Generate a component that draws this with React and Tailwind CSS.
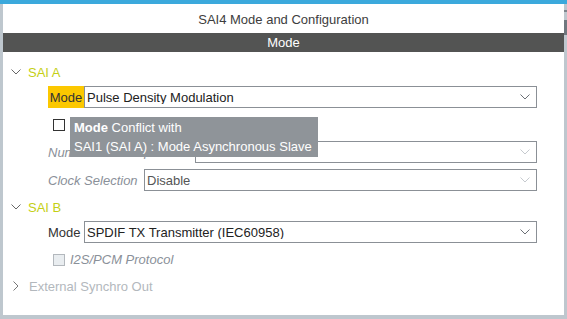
import React from 'react';

const ChevronDown = ({ className }) => (
    <svg className={className} width="10" height="6" viewBox="0 0 10 6" fill="none" stroke="currentColor" strokeWidth="1">
        <path d="M0.5 0.5L5 5L9.5 0.5" />
    </svg>
);

const ChevronRight = ({ className }) => (
    <svg className={className} width="6" height="10" viewBox="0 0 6 10" fill="none" stroke="currentColor" strokeWidth="1">
        <path d="M0.5 0.5L5 5L0.5 9.5" />
    </svg>
);

const Select = ({ value, disabled, className }) => (
    <div className={`h-[22px] border border-[#8b9096] bg-white flex items-center pl-[2px] pr-[6px] ${className}`}>
        <span className={`flex-1 truncate ${disabled ? 'text-[#555]' : 'text-[#222]'}`}>{value}</span>
        <ChevronDown className={disabled ? 'text-[#c6cacf]' : 'text-[#6b7076]'} />
    </div>
);

const App = () => {
    return (
        <div
            className="w-[567px] h-[319px] flex flex-col bg-[#bec7ce] overflow-hidden text-[13px] leading-none"
            style={{ fontFamily: '"Liberation Sans", Arial, sans-serif' }}
        >
            {/* Top accent */}
            <div className="h-[4px] bg-[#3ba9dc] shrink-0" />

            <div className="flex flex-1 min-h-0">
                <div className="w-[3px] bg-[#bec7ce] shrink-0" />

                {/* Main panel */}
                <div className="flex-1 bg-white flex flex-col relative">
                    <div className="h-[29px] flex items-center justify-center text-[#3d3d3d] pt-[1px]">SAI4 Mode and Configuration</div>
                    <div className="h-[19px] bg-[#535453] text-white flex items-center justify-center">Mode</div>

                    {/* Tree */}
                    <div className="flex flex-col pt-[10px]">
                        {/* SAI A */}
                        <div className="h-[20px] flex items-center">
                            <ChevronDown className="ml-[8px] text-[#666]" />
                            <span className="ml-[7px] text-[#c4cf14]">SAI A</span>
                        </div>
                        <div className="h-[22px] mt-[4px] flex items-stretch ml-[45px] mr-[27px]">
                            <div className="w-[36px] bg-[#fcc800] text-[#333] flex items-center justify-center">Mode</div>
                            <Select value="Pulse Density Modulation" className="flex-1" />
                        </div>
                        <div className="h-[33px] flex items-center ml-[50px]">
                            <div className="w-[12px] h-[12px] border border-[#333] bg-white" />
                        </div>
                        <div className="h-[22px] flex items-center ml-[45px] mr-[27px]">
                            <span className="italic text-[#8a9099] w-[147px] whitespace-nowrap overflow-hidden">Number of Microphones</span>
                            <Select value="" disabled className="flex-1" />
                        </div>
                        <div className="h-[22px] mt-[6px] flex items-center ml-[45px] mr-[27px]">
                            <span className="italic text-[#8a9099] w-[96px] whitespace-nowrap">Clock Selection</span>
                            <Select value="Disable" disabled className="flex-1" />
                        </div>

                        {/* SAI B */}
                        <div className="h-[20px] mt-[6px] flex items-center">
                            <ChevronDown className="ml-[8px] text-[#666]" />
                            <span className="ml-[7px] text-[#c4cf14]">SAI B</span>
                        </div>
                        <div className="h-[22px] mt-[4px] flex items-center ml-[45px] mr-[27px]">
                            <span className="text-[#333] w-[36px]">Mode</span>
                            <Select value="SPDIF TX Transmitter (IEC60958)" className="flex-1" />
                        </div>
                        <div className="h-[33px] flex items-center ml-[50px]">
                            <div className="w-[12px] h-[12px] border border-[#b3b8bd] bg-[#e9edf0]" />
                            <span className="ml-[5px] italic text-[#8a9099]">I2S/PCM Protocol</span>
                        </div>
                        <div className="h-[20px] flex items-center">
                            <ChevronRight className="ml-[10px] text-[#777]" />
                            <span className="ml-[10px] text-[#b3b8bd]">External Synchro Out</span>
                        </div>
                    </div>

                    {/* Conflict tooltip */}
                    <div className="absolute left-[67px] top-[113px] w-[248px] h-[40px] bg-[#8f9499] text-white px-[4px] flex flex-col justify-center">
                        <div className="h-[19px] flex items-center"><span className="font-bold">Mode</span>&nbsp;Conflict with</div>
                        <div className="h-[19px] flex items-center whitespace-nowrap">SAI1 (SAI A) : Mode Asynchronous Slave</div>
                    </div>
                </div>

                {/* Scrollbar strip */}
                <div className="w-[3px] bg-[#bec7ce] shrink-0 flex flex-col">
                    <div className="h-[2px] mt-[6px] bg-[#7d858c]" />
                    <div className="h-[15px] mt-[8px] bg-[#6f777e]" />
                </div>
            </div>

            <div className="h-[4px] bg-[#bec7ce] shrink-0" />
        </div>
    );
};

export default App;
